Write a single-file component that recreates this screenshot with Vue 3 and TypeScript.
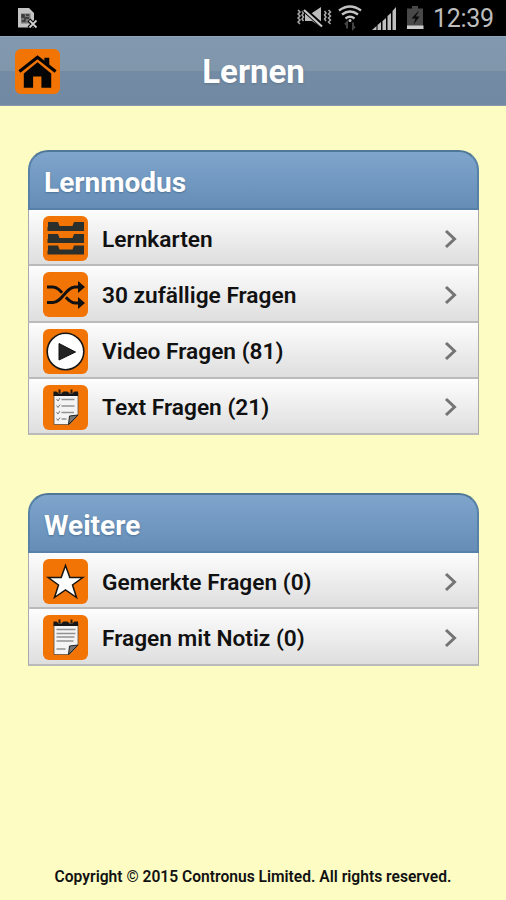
<script setup lang="ts">
type IconName = 'drawers' | 'shuffle' | 'play' | 'checklist' | 'star' | 'note'

interface Entry {
  icon: IconName
  label: string
}

interface Group {
  title: string
  entries: Entry[]
}

const groups: Group[] = [
  {
    title: 'Lernmodus',
    entries: [
      { icon: 'drawers', label: 'Lernkarten' },
      { icon: 'shuffle', label: '30 zufällige Fragen' },
      { icon: 'play', label: 'Video Fragen (81)' },
      { icon: 'checklist', label: 'Text Fragen (21)' },
    ],
  },
  {
    title: 'Weitere',
    entries: [
      { icon: 'star', label: 'Gemerkte Fragen (0)' },
      { icon: 'note', label: 'Fragen mit Notiz (0)' },
    ],
  },
]
</script>

<template>
  <div class="screen">
    <div class="status">
      <svg class="sim" width="22" height="23" viewBox="0 0 22 23">
        <path d="M1 1h11l5 5v14.500H1z" fill="#c4c4c4" />
        <path d="M4 6.500h9.500v10H4z" fill="#777" />
        <path d="M5 8h2v2H5zM9 8h3M5 14h3v-3h4" fill="none" stroke="#333" stroke-width="1.3" />
        <path d="M12 13l8 8M20 13l-8 8" stroke="#000" stroke-width="4" />
        <path d="M12.500 13.500l7 7M19.500 13.500l-7 7" stroke="#d0d0d0" stroke-width="1.8" />
      </svg>
      <svg class="tray" width="128" height="28" viewBox="0 0 128 28">
        <g fill="none" stroke="#aaa" stroke-width="1.500">
          <path d="M1 7l2 2-2 2 2 2-2 2 2 2-2 2 2 2" />
          <path d="M5 8l1.500 2L5 12l1.500 2L5 16l1.500 2" />
          <path d="M27.500 8l1.500 2-1.500 2 1.500 2-1.500 2 1.500 2" />
          <path d="M31.500 7l2 2-2 2 2 2-2 2 2 2-2 2 2 2" />
        </g>
        <path d="M8 10h7l9-6v20l-9-6H8z" fill="#bcbcbc" />
        <path d="M7 6.500l19 17" stroke="#000" stroke-width="5" />
        <path d="M7 7l18 16.500" stroke="#c8c8c8" stroke-width="2.200" />
        <g fill="none" stroke="#c2c2c2" stroke-width="2.300">
          <path d="M42 7.500q11-8 22 0" />
          <path d="M45 11.500q8-6 16 0" />
          <path d="M48.500 15.500q4.500-3.500 9 0" />
        </g>
        <circle cx="53" cy="17.500" r="1.500" fill="#c2c2c2" />
        <path d="M50 25.500v-6l-2 2M56 19.500v6l2-2" fill="none" stroke="#444" stroke-width="2" />
        <path d="M75 27l4.500-4v4zM80.500 22l3.500-3v8h-3.500zM85.500 18l3.500-3v12h-3.500zM90.500 13l3.500-3v17h-3.500zM95.500 8l3.500-4v23h-3.500z" fill="#bebebe" />
        <path d="M110 5.500h5V3h6v2.500h5V26h-16z" fill="#484848" />
        <path d="M121 8.500l-6.500 7h4l-2 6 6-8h-4l3.500-5z" fill="#090909" />
        <path d="M110 22.500h16.500v3.500H110z" fill="#ccc" />
      </svg>
      <span class="clock">12:39</span>
    </div>

    <header class="bar">
      <button class="tile home" type="button" aria-label="Home">
        <svg width="45" height="45" viewBox="0 0 46 46">
          <path d="M4.500 23L23 8.500 41.500 23" fill="none" stroke="#050505" stroke-width="3.200" />
          <path d="M30 9h5v9L30 14z" fill="#050505" />
          <path d="M9 25l14-11.500L37 25v14.500H27V28h-8.500v11.500H9z" fill="#050505" />
        </svg>
      </button>
      <h1>Lernen</h1>
    </header>

    <main>
      <section v-for="group in groups" :key="group.title" class="group">
        <h2><span>{{ group.title }}</span></h2>
        <ul>
          <li v-for="entry in group.entries" :key="entry.label">
            <span class="tile">
              <svg width="45" height="45" viewBox="0 0 45 45">
                <g v-if="entry.icon === 'drawers'" fill="#2b302d">
                  <path d="M5 6h10l1.500 4h13L31 6h10v9H4.500v-4H5z" />
                  <path d="M5 18h10l1.500 4h13l1.500-4h10v9H4.500v-4H5z" />
                  <path d="M5 29.500h10l1.500 4h13l1.500-4h10v9H4.500v-4H5z" />
                </g>
                <g v-else-if="entry.icon === 'shuffle'">
                  <path d="M4 15h6c9 0 13 16 22 16h5" fill="none" stroke="#111" stroke-width="2.800" />
                  <path d="M14 30L28 16" stroke="#f27405" stroke-width="6" />
                  <path d="M4 30.500h6c9 0 13-15.500 22-15.500h5" fill="none" stroke="#111" stroke-width="2.800" />
                  <path d="M35 9l7 6-7 6zM35 25l7 6-7 6z" fill="#111" />
                </g>
                <g v-else-if="entry.icon === 'play'">
                  <circle cx="22.500" cy="22.500" r="18.300" fill="#fff" stroke="#171717" stroke-width="1.600" />
                  <path d="M16 14.500l16.500 8.500L16 31z" fill="#242424" stroke="#111" />
                </g>
                <g v-else-if="entry.icon === 'star'">
                  <path d="M22.500 6.500l4.300 12h13L29.500 26l4 12.500-11-7.500-11 7.500 4-12.500-10.300-7.500h13z" fill="#fff" stroke="#1a1510" stroke-width="1.500" />
                </g>
                <g v-else>
                  <path d="M11 8h24v22l-8.500 9.500H11z" fill="#f4f4f4" stroke="#60513f" stroke-width=".8" />
                  <path d="M10.500 6.500h3l2 2h3l2-2h4l2 2h3l2-2h3.500V11H10.500z" fill="#171717" />
                  <path d="M16.500 4.500v4M28.500 4.500v4" stroke="#2c1908" stroke-width="2" />
                  <path d="M25.500 39.500l1-8.500 8.500-1z" fill="#777" stroke="#222" stroke-width="1" />
                  <g v-if="entry.icon === 'checklist'" fill="none">
                    <path d="M18.500 14.500h13M18.500 21h13M18.500 27.500h12.500M18.500 34h5" stroke="#929292" stroke-width="1.700" />
                    <path d="M13.500 14l1.500 2 2-3M13.500 20.500l1.500 2 2-3M13.500 27l1.500 2 2-3M13.500 33.500l1.500 2 2-3" stroke="#777" stroke-width="1" />
                  </g>
                  <path v-else d="M13.500 14.500h19M13.500 18.500h19M13.500 22h18M13.500 26h17M13.500 34h9" stroke="#919191" stroke-width="1.500" />
                </g>
              </svg>
            </span>
            <span class="label">{{ entry.label }}</span>
            <svg class="chevron" width="14" height="20" viewBox="0 0 14 20">
              <path d="M2 2l8.500 8L2 18" fill="none" stroke="#747474" stroke-width="3" />
            </svg>
          </li>
        </ul>
      </section>
    </main>

    <footer>Copyright © 2015 Contronus Limited. All rights reserved.</footer>
  </div>
</template>

<style>
body {
  margin: 0;
  background: #fcfcc3;
}
</style>

<style scoped>
.screen {
  box-sizing: border-box;
  width: 506px;
  height: 900px;
  display: flex;
  flex-direction: column;
  overflow: hidden;
  background: #fcfcc3;
  color: #111;
  font-family: Roboto, "Liberation Sans", sans-serif;
}

svg {
  display: block;
  flex: none;
}

.status {
  box-sizing: border-box;
  height: 36px;
  flex: none;
  display: flex;
  align-items: flex-start;
  padding: 0 12px 0 17px;
  background: #000;
}

.sim {
  margin-top: 7px;
}

.tray {
  margin: 3px 8px 0 auto;
}

.clock {
  width: 61px;
  color: #bdbdbd;
  font-size: 25px;
  line-height: 38px;
  letter-spacing: -.3px;
  white-space: nowrap;
}

.bar {
  box-sizing: border-box;
  height: 70px;
  flex: none;
  display: grid;
  grid-template-columns: 45px 1fr 45px;
  align-items: center;
  padding: 0 14px 0 15px;
  border-top: 1px solid #8fa5ba;
  border-bottom: 1px solid #8799aa;
  background: linear-gradient(#8199b0 0, #8096ab 50%, #738ba4 50%, #7189a2 100%);
}

.tile {
  width: 45px;
  height: 45px;
  flex: none;
  border-radius: 6px;
  background: #f27405;
}

.home {
  display: block;
  border: 0;
  padding: 0;
}

h1 {
  margin: 0;
  padding-top: 2px;
  color: #fff;
  font-size: 33px;
  line-height: 40px;
  font-weight: 700;
  text-align: center;
  text-shadow: 0 1px 2px #60758b;
}

main {
  flex: 1;
  display: flex;
  flex-direction: column;
  gap: 58px;
  padding: 44px 27px 0 28px;
}

h2 {
  box-sizing: border-box;
  height: 60px;
  margin: 0;
  padding: 1px 14px 0;
  border: 2px solid #5781a8;
  border-top-color: #4f7898;
  border-radius: 20px 20px 0 0;
  background: linear-gradient(#7fa5cd, #658db5);
  color: #fff;
  font-size: 28px;
  line-height: 60px;
  font-weight: 700;
  text-shadow: 0 1px 2px #4d7195;
}

ul {
  margin: 0;
  padding: 0;
  list-style: none;
}

li {
  box-sizing: border-box;
  height: 56.250px;
  display: flex;
  align-items: center;
  padding: 3px 20px 0 14px;
  border: solid #aaa;
  border-width: 0 1px 2px;
  border-bottom-color: #bababa;
  background: linear-gradient(#fdfdfd, #dedede);
}

.label {
  flex: 1;
  padding: 2px 0 0 14px;
  font-size: 22.700px;
  line-height: 30px;
  font-weight: 600;
  white-space: nowrap;
}

footer {
  padding-bottom: 13px;
  font-size: 15.600px;
  line-height: 20px;
  font-weight: 600;
  text-align: center;
  white-space: nowrap;
}
</style>
